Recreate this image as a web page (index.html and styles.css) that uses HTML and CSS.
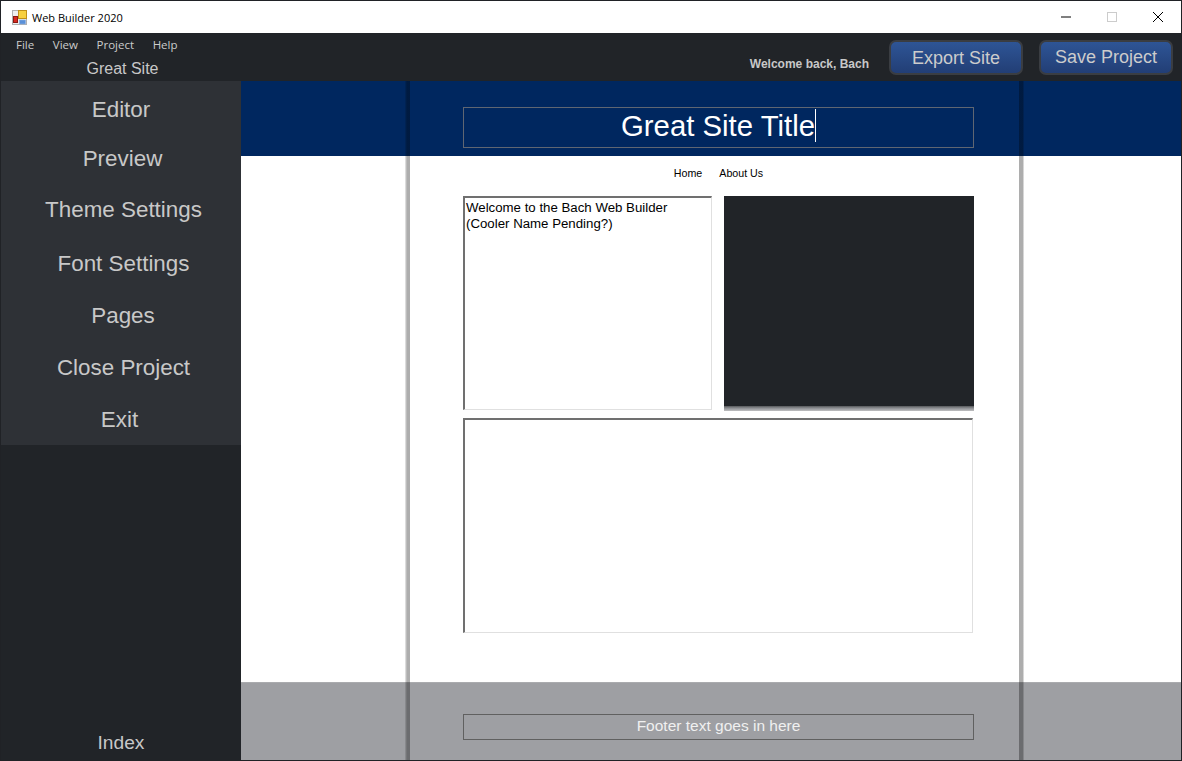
FILE: index.html
```html
<!DOCTYPE html>
<html lang="en">
<head>
    <meta charset="UTF-8">
    <title>Web Builder 2020</title>
    <link rel="stylesheet" href="styles.css">
</head>
<body>
    <div class="window">
        <div class="titlebar">
            <svg class="app-icon" width="15" height="15" viewBox="0 0 15 15">
                <rect x="0.5" y="0.5" width="14" height="14" fill="#eee" stroke="#b0b0b0"/>
                <rect x="6.5" y="0.5" width="8" height="8" fill="#f7d040" stroke="#c09018"/>
                <rect x="1.5" y="6.5" width="4" height="6" fill="#d82820" stroke="#8a1810"/>
                <rect x="7.5" y="10" width="6" height="4" fill="#5a90d8" stroke="#8ab0e0" stroke-width="0.6"/>
            </svg>
            <span class="window-title">Web Builder 2020</span>
            <div class="window-controls">
                <svg class="ctl" width="46" height="32" viewBox="0 0 46 32"><path d="M18 16h10" stroke="#000" fill="none"/></svg>
                <svg class="ctl" width="46" height="32" viewBox="0 0 46 32"><rect x="18.5" y="11.5" width="9" height="9" stroke="#ccc" fill="none"/></svg>
                <svg class="ctl" width="46" height="32" viewBox="0 0 46 32"><path d="M18 11l10 10M28 11l-10 10" stroke="#000" fill="none"/></svg>
            </div>
        </div>

        <div class="topbar">
            <div class="topbar-left">
                <ul class="menubar">
                    <li>File</li>
                    <li>View</li>
                    <li>Project</li>
                    <li>Help</li>
                </ul>
                <div class="project-name">Great Site</div>
            </div>
            <div class="topbar-right">
                <span class="welcome">Welcome back, Bach</span>
                <button class="btn">Export Site</button>
                <button class="btn btn-save">Save Project</button>
            </div>
        </div>

        <div class="main">
            <div class="sidebar">
                <div class="side-menu">
                    <div class="side-item item-editor">Editor</div>
                    <div class="side-item item-preview">Preview</div>
                    <div class="side-item item-theme">Theme Settings</div>
                    <div class="side-item item-font">Font Settings</div>
                    <div class="side-item item-pages">Pages</div>
                    <div class="side-item item-close">Close Project</div>
                    <div class="side-item item-exit">Exit</div>
                </div>
                <div class="page-name">Index</div>
            </div>

            <div class="stage">
                <div class="page-edge edge-left"></div>
                <div class="page-edge edge-right"></div>

                <div class="site-header">
                    <div class="site-title">Great Site Title<span class="caret"></span></div>
                </div>
                <div class="site-body">
                    <div class="site-nav">
                        <span>Home</span>
                        <span>About Us</span>
                    </div>
                    <div class="site-row">
                        <div class="textbox textbox-small">Welcome to the Bach Web Builder<br>(Cooler Name Pending?)</div>
                        <div class="dark-box"></div>
                    </div>
                    <div class="textbox textbox-wide"></div>
                </div>
                <div class="site-footer">
                    <div class="footer-text">Footer text goes in here</div>
                </div>
            </div>
        </div>
    </div>
</body>
</html>
```

FILE: styles.css
```css
* {
    box-sizing: border-box;
}
html, body {
    margin: 0;
    height: 100%;
    overflow: hidden;
}
body {
    font-family: "Liberation Sans", Arial, sans-serif;
    background-color: #fff;
}
.window {
    width: 1182px;
    height: 761px;
    display: flex;
    flex-direction: column;
    border: 1px solid #202226;
}

/* title bar */
.titlebar {
    height: 32px;
    flex-shrink: 0;
    display: flex;
    align-items: center;
    background: #fff;
    padding-left: 11px;
}
.app-icon {
    margin-right: 5px;
}
.window-title {
    font-family: "Open Sans", sans-serif;
    font-size: 11px;
    color: #000;
}
.window-controls {
    margin-left: auto;
    display: flex;
}
.ctl {
    display: block;
}

/* top bar */
.topbar {
    height: 48px;
    flex-shrink: 0;
    display: flex;
    justify-content: space-between;
    background: #212428;
}
.topbar-left {
    width: 240px;
}
.menubar {
    list-style: none;
    margin: 0;
    padding: 4px 0 0 15px;
    display: flex;
    gap: 18.6px;
    font-family: "Open Sans", sans-serif;
    font-size: 11.5px;
    line-height: 16px;
    color: #ccc;
}
.project-name {
    text-align: center;
    font-size: 16px;
    line-height: 18px;
    margin-top: 7px;
    padding-left: 3px;
    color: #c8c8c8;
}
.topbar-right {
    display: flex;
    align-items: flex-start;
    padding: 7px 8px 0 0;
}
.welcome {
    font-size: 12px;
    font-weight: bold;
    color: #c8c8c8;
    margin: 17px 20px 0 0;
}
.btn {
    width: 134px;
    height: 35px;
    font-family: inherit;
    font-size: 18px;
    color: #ccc;
    background: linear-gradient(#2e5596, #223e75);
    border: 2px solid #3a3d42;
    border-radius: 7px;
    padding: 2px 0 0;
}
.btn-save {
    margin-left: 16px;
    padding: 0;
}

/* left menu */
.main {
    flex: 1;
    display: flex;
    min-height: 0;
}
.sidebar {
    width: 240px;
    flex-shrink: 0;
    display: flex;
    flex-direction: column;
    background: #212428;
}
.side-menu {
    height: 364px;
    background: #2e3136;
    display: flex;
    flex-direction: column;
    align-items: center;
    padding-top: 16px;
    font-size: 22.4px;
    color: #c8c8c8;
}
.side-item {
    line-height: 26px;
}
.item-preview { margin: 23px 0 0 3px; }
.item-theme { margin: 25px 0 0 5px; }
.item-font { margin: 28px 0 0 5px; }
.item-pages { margin: 26px 0 0 4px; }
.item-close { margin: 26px 0 0 5px; }
.item-exit { margin: 26px 3px 0 0; }
.page-name {
    margin-top: auto;
    text-align: center;
    font-size: 19.2px;
    line-height: 24px;
    padding-bottom: 5px;
    color: #c8c8c8;
}

/* page being edited */
.stage {
    flex: 1;
    position: relative;
    display: flex;
    flex-direction: column;
    background: #fff;
}
.page-edge {
    position: absolute;
    top: 0;
    bottom: 0;
    width: 5px;
}
.edge-left {
    left: 164px;
    background: linear-gradient(to right, rgba(0, 0, 0, 0.08), rgba(0, 0, 0, 0.32) 40%, rgba(0, 0, 0, 0.32));
}
.edge-right {
    left: 778px;
    background: linear-gradient(to right, rgba(0, 0, 0, 0.32), rgba(0, 0, 0, 0.32) 70%, rgba(0, 0, 0, 0.08));
}
.site-header {
    height: 75px;
    flex-shrink: 0;
    background: #00275f;
    padding: 26px 207px 0 222px;
}
.site-title {
    height: 41px;
    border: 1px solid #5f6672;
    color: #fff;
    font-size: 29.33px;
    line-height: 35px;
    text-align: center;
}
.caret {
    display: inline-block;
    width: 1px;
    height: 33px;
    background: #fff;
    vertical-align: -6px;
}
.site-body {
    flex: 1;
    padding: 0 207px 0 222px;
}
.site-nav {
    display: flex;
    justify-content: center;
    gap: 17px;
    padding: 11px 0 0;
    height: 40px;
    font-size: 10.67px;
    line-height: 12px;
    color: #000;
}
.site-row {
    display: flex;
    gap: 12px;
}
.textbox {
    background: #fff;
    border: 1px solid #e0e0e0;
    border-top: 2px solid #707070;
    border-left: 2px solid #707070;
    font-size: 13.25px;
    line-height: 16px;
    padding: 2px 1px;
    color: #000;
}
.textbox-small {
    width: 249px;
    height: 214px;
}
.dark-box {
    width: 250px;
    height: 215px;
    background: linear-gradient(#212428 210px, #55575a 210px, #8a8c90 212px, #c0c0c2 215px);
}
.textbox-wide {
    width: 510px;
    height: 215px;
    margin-top: 7px;
}
.site-footer {
    height: 78px;
    flex-shrink: 0;
    background: #9e9fa3;
    border-top: 1px solid #aaabae;
    padding: 31px 207px 0 222px;
}
.footer-text {
    height: 26px;
    border: 1px solid #606060;
    color: #f0f0f0;
    font-size: 15.5px;
    line-height: 22px;
    text-align: center;
}
```
